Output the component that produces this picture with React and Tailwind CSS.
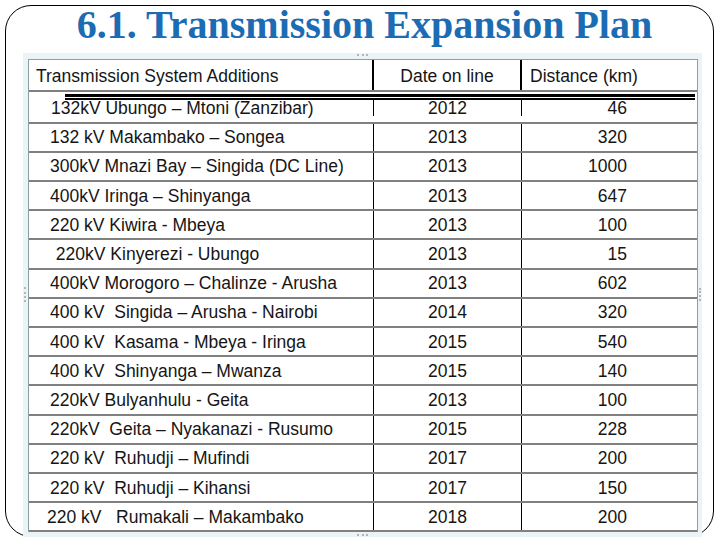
import React from "react";

const rows = [
  ["132kV Ubungo – Mtoni (Zanzibar)", "2012", "46", "pl-[22px]"],
  ["132 kV Makambako – Songea", "2013", "320", "pl-[21px]"],
  ["300kV Mnazi Bay – Singida (DC Line)", "2013", "1000", "pl-[21px]"],
  ["400kV Iringa – Shinyanga", "2013", "647", "pl-[21px]"],
  ["220 kV Kiwira - Mbeya", "2013", "100", "pl-[21px]"],
  [" 220kV Kinyerezi - Ubungo", "2013", "15", "pl-[22px]"],
  ["400kV Morogoro – Chalinze - Arusha", "2013", "602", "pl-[21px]"],
  ["400 kV  Singida – Arusha - Nairobi", "2014", "320", "pl-[21px]"],
  ["400 kV  Kasama - Mbeya - Iringa", "2015", "540", "pl-[21px]"],
  ["400 kV  Shinyanga – Mwanza", "2015", "140", "pl-[21px]"],
  ["220kV Bulyanhulu - Geita", "2013", "100", "pl-[21px]"],
  ["220kV  Geita – Nyakanazi - Rusumo", "2015", "228", "pl-[21px]"],
  ["220 kV  Ruhudji – Mufindi", "2017", "200", "pl-[21px]"],
  ["220 kV  Ruhudji – Kihansi", "2017", "150", "pl-[21px]"],
  ["220 kV   Rumakali – Makambako", "2018", "200", "pl-[18px]"],
];

function Row({ name, year, dist, indent, first, last }) {
  return (
    <div
      className={
        "grid grid-cols-[345px_148px_175px] grid-rows-[minmax(0,1fr)] " +
        (first
          ? "h-[21.7px] pb-[6px]"
          : "h-[29.2px] border-t-2 border-[#808080]") +
        (last ? " h-[31.2px] border-b-2" : "")
      }
    >
      <div className={"flex items-center whitespace-pre border-r border-black " + indent}>
        {name}
      </div>
      <div className="flex items-center justify-center border-r border-black">{year}</div>
      <div className="flex items-center justify-end pr-[70px]">{dist}</div>
    </div>
  );
}

function App() {
  return (
    <div className="w-[720px] h-[540px] overflow-hidden bg-white p-[5px]">
      <div className="w-[709px] h-[532px] rounded-[26px] border border-black">
        <h1 className="-mt-[1px] h-[40px] pl-[10px] text-center font-['Liberation_Serif',serif] text-[40px] font-bold leading-[40px] text-[#1c6cb4]">
          6.1. Transmission Expansion Plan
        </h1>

        <div className="relative mt-[8px] ml-[17px] w-[679px] bg-[#eaf4f7] pt-[6px] pb-[5px] pl-[5px] pr-[4px]">
          {/* selection handles */}
          <span className="absolute left-[334px] top-[1px] w-[11px] border-t-2 border-dotted border-[#b5b5b5]" />
          <span className="absolute left-[1px] top-[234px] h-[15px] border-l-2 border-dotted border-[#b5b5b5]" />
          <span className="absolute left-[676px] top-[235px] h-[13px] border-l-2 border-dotted border-[#b5b5b5]" />
          <span className="absolute left-[334px] bottom-[1px] w-[11px] border-t-2 border-dotted border-[#b5b5b5]" />

          <div className="w-[670px] border-x border-t border-[#8f9ea3] bg-white font-['Liberation_Sans',Arial,sans-serif] text-[17.5px] leading-[20px] text-[#151515]">
            <div className="grid h-[32px] grid-cols-[345px_148px_175px] border-b-2 border-[#7f7f7f]">
              <div className="flex items-center border-r-2 border-black pl-[7px] pt-[2px]">
                Transmission System Additions
              </div>
              <div className="flex items-center justify-center border-r-2 border-black pt-[2px]">
                Date on line
              </div>
              <div className="flex items-center pl-[8px] pt-[2px]">Distance (km)</div>
            </div>

            <div className="h-[8px] pl-[36px] pr-[2px] pt-[2px]">
              <div className="h-[3px] bg-black" />
              <div className="mt-[1px] h-[2px] bg-black" />
            </div>

            {rows.map((r, i) => (
              <Row
                key={i}
                name={r[0]}
                year={r[1]}
                dist={r[2]}
                indent={r[3]}
                first={i === 0}
                last={i === rows.length - 1}
              />
            ))}
          </div>
        </div>
      </div>
    </div>
  );
}

export default App;
